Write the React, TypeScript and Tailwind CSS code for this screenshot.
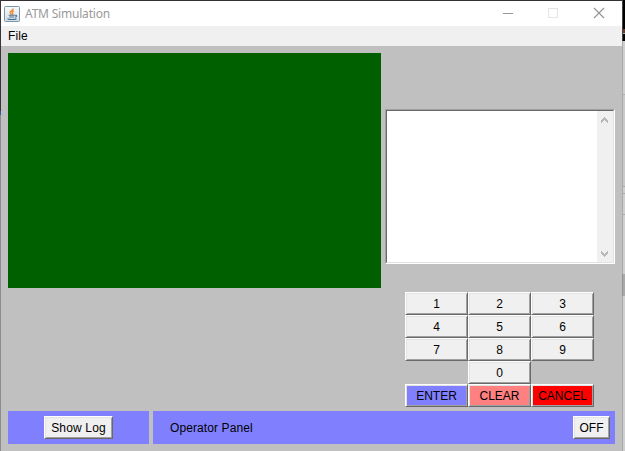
import React from "react";

const raised =
  "flex items-center justify-center border border-t-white border-l-white border-r-[#696969] border-b-[#696969] shadow-[inset_1px_1px_0_#e3e3e3,inset_-1px_-1px_0_#a0a0a0]";

type KeyProps = { label: string; className?: string };

function Key({ label, className = "bg-[#f0f0f0]" }: KeyProps) {
  return (
    <button type="button" className={`${raised} ${className}`}>
      {label}
    </button>
  );
}

function JavaIcon() {
  return (
    <svg width="16" height="16" viewBox="0 0 16 16" fill="none">
      <defs>
        <linearGradient id="tile" x1="0" y1="0" x2="0" y2="1">
          <stop offset="0" stopColor="#f8fafb" />
          <stop offset="1" stopColor="#d3dde5" />
        </linearGradient>
      </defs>
      <rect x="0.5" y="0.5" width="15" height="15" rx="1" fill="url(#tile)" stroke="#7895a9" />
      <path d="M9 2.4C9.8 4.3 5.5 5 6.2 6.8C6.5 7.5 7.2 7.8 7.2 8.8M10 4.8C8 5.6 7.7 6.4 8.6 7.3C8.9 7.8 8.7 8.3 8.2 8.8" stroke="#ef8a32" strokeWidth="1.4" />
      <path d="M4.7 9.2H10.8M11 9.3C13.5 8.9 13 11 11 11.3M5.2 11H10.2M3.4 12.7C5.5 13.8 10.8 13.7 12.5 12.7" stroke="#466f91" strokeWidth="1.1" />
    </svg>
  );
}

function Chevron({ down = false }: { down?: boolean }) {
  return (
    <svg
      width="7"
      height="6"
      viewBox="0 0 7 6"
      shapeRendering="crispEdges"
      className={down ? "rotate-180" : ""}
    >
      <path d="M3 0H4V1H5V2H6V3H7V6H6V5H5V4H4V3H3V4H2V5H1V6H0V3H1V2H2V1H3Z" fill="#b8b8b8" />
    </svg>
  );
}

function TitleBar() {
  return (
    <header className="flex h-[25px] items-center bg-white pl-[3px]">
      <JavaIcon />
      <span className="ml-[5px] font-['Noto_Sans','Open_Sans',sans-serif] text-[12px] leading-4 tracking-[-0.2px] text-[#999]">
        ATM Simulation
      </span>
      <div className="mb-px ml-auto flex pr-[17px]">
        <svg width="102" height="12" viewBox="0 0 102 12" fill="none">
          <path d="M0 6.5H10" stroke="#999" />
          <rect x="45.5" y="1.5" width="9" height="9" stroke="#e5e5e5" />
          <path d="M91 1L101 11M101 1L91 11" stroke="#929292" strokeWidth="1.1" />
        </svg>
      </div>
    </header>
  );
}

function Keypad() {
  return (
    <div className="mt-7 ml-5 grid w-[189px] grid-cols-3 auto-rows-[23px]">
      {["1", "2", "3", "4", "5", "6", "7", "8", "9"].map((n) => (
        <Key key={n} label={n} />
      ))}
      <span />
      <Key label="0" />
      <span />
      <Key label="ENTER" className="bg-[#8080ff]" />
      <Key label="CLEAR" className="bg-[#ff8080]" />
      <Key label="CANCEL" className="bg-[#ff0000]" />
    </div>
  );
}

export default function App() {
  return (
    <div className="flex h-[451px] w-[625px] overflow-hidden bg-[#c0c0c0] font-['Liberation_Sans',Arial,sans-serif] text-[12px] leading-[14px] text-black">
      <div className="flex w-px shrink-0 flex-col">
        <div className="h-[111px] bg-[#39353a]" />
        <div className="h-1 bg-[#3158a8]" />
        <div className="flex-1 bg-[#8b8b8b]" />
      </div>

      <div className="flex w-[621px] shrink-0 flex-col border-t border-[#332f33]">
        <TitleBar />
        <nav className="flex h-5 items-center bg-[#f0f0f0] pl-[7px] tracking-[0.1px]">File</nav>
        <main className="flex flex-1 flex-col pt-[7px] pr-[7px] pl-[7px]">
          <div className="flex h-[358px] gap-1">
            <div className="h-[235px] w-[373px] bg-[#006000]" />
            <div className="w-[230px] pt-14">
              <div className="flex h-[155px] border border-t-[#a0a0a0] border-r-white border-b-white border-l-[#a0a0a0] bg-white">
                <div className="flex flex-1 border border-t-[#696969] border-r-[#e3e3e3] border-b-[#e3e3e3] border-l-[#696969]">
                  <div className="flex-1" />
                  <div className="flex w-4 flex-col items-start justify-between bg-[#f0f0f0] pt-1.5 pb-[5px] pl-1">
                    <Chevron />
                    <Chevron down />
                  </div>
                </div>
              </div>
              <Keypad />
            </div>
          </div>
          <footer className="flex h-[33px] gap-1">
            <div className="flex w-[141px] items-center justify-center bg-[#8080ff]">
              <button type="button" className={`${raised} h-[23px] w-[69px] bg-[#f0f0f0] tracking-[0.15px]`}>
                Show Log
              </button>
            </div>
            <div className="flex flex-1 items-center justify-between bg-[#8080ff] pr-[5px] pl-[17px]">
              <span className="tracking-[0.1px]">Operator Panel</span>
              <button type="button" className={`${raised} h-[23px] w-[37px] bg-[#f0f0f0]`}>
                OFF
              </button>
            </div>
          </footer>
        </main>
      </div>

      <div className="flex w-px shrink-0 flex-col">
        <div className="h-[41px] bg-[#444]" />
        <div className="h-[233px] bg-[#aaa]" />
        <div className="h-[22px] bg-[#929292]" />
        <div className="flex-1 bg-[#aaa]" />
      </div>
      <div className="flex w-0.5 shrink-0 flex-col">
        <div className="h-[29px] bg-black" />
        <div className="h-1 bg-[#623b28]" />
        <div className="h-px bg-[#aaa]" />
        <div className="h-[7px] bg-black" />
        <div className="h-[53px] bg-[#d0d0d0]" />
        <div className="h-px bg-[#b0b0b0]" />
        <div className="h-[91px] bg-[#cacaca]" />
        <div className="h-px bg-[#aaa]" />
        <div className="h-1.5 bg-[#d0d0d0]" />
        <div className="h-px bg-[#aaa]" />
        <div className="h-5 bg-[#d0d0d0]" />
        <div className="h-px bg-[#aaa]" />
        <div className="h-[59px] bg-[#d0d0d0]" />
        <div className="h-[22px] bg-[#aaa]" />
        <div className="flex-1 bg-[#d0d0d0]" />
      </div>
    </div>
  );
}
